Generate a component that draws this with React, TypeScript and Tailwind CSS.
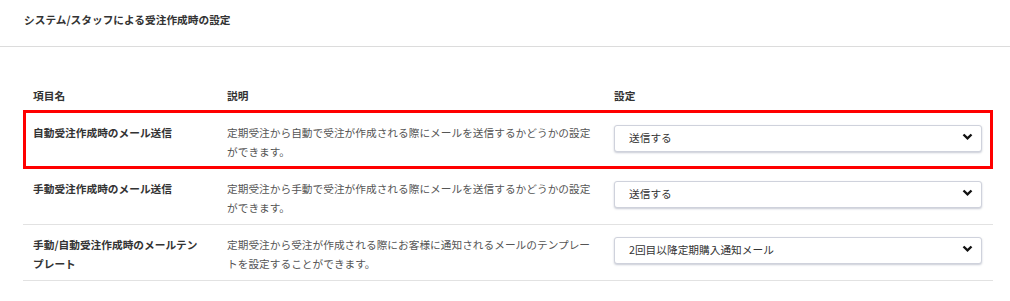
import React from 'react';

const font = { fontFamily: '"Noto Sans CJK JP", "Noto Sans", sans-serif' };

const rows = [
    {
        name: '自動受注作成時のメール送信',
        desc: '定期受注から自動で受注が作成される際にメールを送信するかどうかの設定ができます。',
        value: '送信する',
        highlight: true,
    },
    {
        name: '手動受注作成時のメール送信',
        desc: '定期受注から手動で受注が作成される際にメールを送信するかどうかの設定ができます。',
        value: '送信する',
    },
    {
        name: '手動/自動受注作成時のメールテンプレート',
        desc: '定期受注から受注が作成される際にお客様に通知されるメールのテンプレートを設定することができます。',
        value: '2回目以降定期購入通知メール',
    },
];

const SelectBox = ({ value }: { value: string }) => {
    return (
        <div className="relative h-[27px] w-full">
            <select
                defaultValue={value}
                className="h-full w-full appearance-none rounded-[3px] border border-[#cfd2dc] bg-white pl-[14px] pr-8 text-[10.7px] text-[#333] shadow-[0_1px_2px_rgba(40,50,90,0.25)] outline-none"
                style={font}
            >
                <option>{value}</option>
            </select>
            <svg
                className="pointer-events-none absolute right-[9px] top-[10px]"
                width="11"
                height="7"
                viewBox="0 0 11 7"
            >
                <polyline points="1.5,1.5 5.5,5.3 9.5,1.5" fill="none" stroke="#111" strokeWidth="2.4" />
            </svg>
        </div>
    );
};

const SettingRow = ({ name, desc, value, highlight }: { name: string; desc: string; value: string; highlight?: boolean }) => {
    return (
        <div
            className={
                highlight
                    ? 'grid grid-cols-[194px_387px_389px] pt-[13px] pb-[8px] shadow-[inset_0_0_0_3px_#f00]'
                    : 'grid grid-cols-[194px_387px_389px] pt-[10px] pb-[7px] border-b border-[#e2e2e2]'
            }
        >
            <div className="pl-[10px] pr-[14px] text-[10.7px] font-bold leading-[19px] text-[#333]">{name}</div>
            <div className="pl-[10px] pr-[4px] text-[10.7px] leading-[19px] text-[#555]">{desc}</div>
            <div className="pl-[10px] pr-[11px]">
                <SelectBox value={value} />
            </div>
        </div>
    );
};

const App = () => {
    return (
        <div className="h-[301px] w-[1010px] bg-white" style={font}>
            <div className="h-[47px] border-b border-[#dcdcdc] pl-[24px] pt-[10px]">
                <h2 className="text-[10.7px] font-bold leading-[19px] text-[#333]">システム/スタッフによる受注作成時の設定</h2>
            </div>
            <div className="pl-[23px] pt-[29px]">
                <div className="w-[970px]">
                    <div className="grid h-[34px] grid-cols-[194px_387px_389px] pt-[10px] text-[10.7px] font-bold leading-[19px] text-[#333]">
                        <div className="pl-[10px]">項目名</div>
                        <div className="pl-[10px]">説明</div>
                        <div className="pl-[10px]">設定</div>
                    </div>
                    {rows.map((r) => (
                        <SettingRow key={r.name} {...r} />
                    ))}
                </div>
            </div>
        </div>
    );
};

export default App;
